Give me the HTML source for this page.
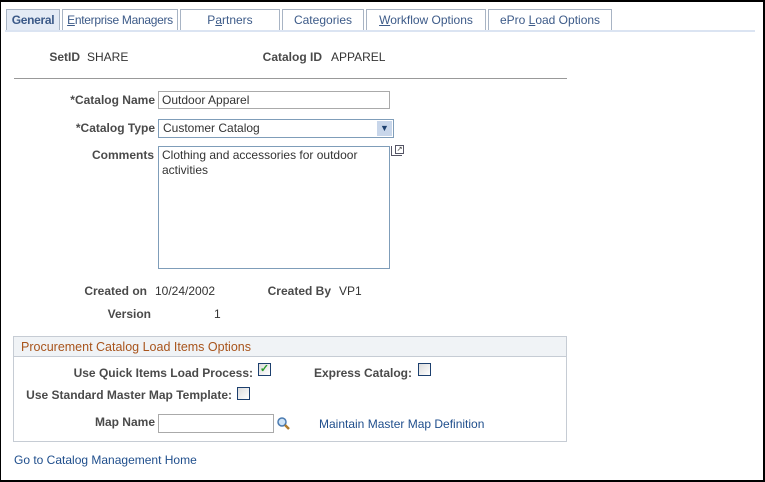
<!DOCTYPE html>
<html><head><style>
*{margin:0;padding:0;box-sizing:border-box}
body{width:765px;height:482px;position:relative;background:#fff;font-family:"Liberation Sans",Arial,sans-serif;font-size:12px;color:#333;overflow:hidden}
.frame{position:absolute;left:0;top:0;width:765px;height:482px;border:2px solid #000;border-left-width:1px}
.a{position:absolute;white-space:nowrap}
.b{position:absolute;white-space:nowrap;font-weight:bold;color:#4a4a4a;letter-spacing:0px;text-align:right;width:300px}
.tab{position:absolute;top:9px;height:22px;border:1px solid #a8b4c4;border-bottom:none;background:#fff;color:#3c5a88;text-align:center;line-height:20px;font-size:12px}
.tab.act{background:#e4ebf5;font-weight:bold;color:#3c5a88;letter-spacing:-0.3px}
.inp{position:absolute;border:1px solid #7f9db9;background:#fff;font-size:12px;padding-left:3px;line-height:16px}
.cb{position:absolute;width:13px;height:13px;border:1px solid #1c3f6e;background:linear-gradient(135deg,#dcdcdc,#fff)}
.lk{color:#1f4e8c}
</style></head><body>
<div class="frame"></div>
<div class="tab act" style="left:6px;width:54px">General</div>
<div class="tab" style="left:62px;width:116px;letter-spacing:-0.3px"><u>E</u>nterprise Managers</div>
<div class="tab" style="left:180px;width:100px">P<u>a</u>rtners</div>
<div class="tab" style="left:282px;width:82px">Cate<u>g</u>ories</div>
<div class="tab" style="left:366px;width:120px"><u>W</u>orkflow Options</div>
<div class="tab" style="left:488px;width:124px">ePro <u>L</u>oad Options</div>
<div style="position:absolute;left:5px;top:30px;width:750px;height:2px;background:#dbe4f2"></div>

<div class="b" style="left:-220px;top:50px">SetID</div><div class="a" style="left:87px;top:50px">SHARE</div>
<div class="b" style="left:22px;top:50px">Catalog ID</div><div class="a" style="left:331px;top:50px">APPAREL</div>
<div style="position:absolute;left:14px;top:78px;width:553px;height:1px;background:#999"></div>

<div class="b" style="left:-145px;top:93px">*Catalog Name</div>
<div class="inp" style="left:158px;top:91px;width:232px;height:18px;border-color:#aaa">Outdoor Apparel</div>
<div class="b" style="left:-145px;top:121px">*Catalog Type</div>
<div class="inp" style="left:158px;top:119px;width:236px;height:19px;padding-left:4px">Customer Catalog
<div style="position:absolute;right:1px;top:1px;width:15px;height:15px;background:#c8d6ea;color:#1c3f6e;font-size:9px;text-align:center;line-height:15px">&#9660;</div></div>
<div class="b" style="left:-146px;top:148px">Comments</div>
<div class="inp" style="left:158px;top:146px;width:232px;height:123px;padding:1px 3px;white-space:normal;line-height:15px">Clothing and accessories for outdoor activities</div>
<div class="a" style="left:391px;top:146px;width:11px;height:10px;border:1px solid #556;border-top:none;border-right:none"></div>
<div class="a" style="left:395px;top:145px;width:9px;height:9px;border:1px solid #556;font-size:7px;line-height:7px;text-align:center">&#8599;</div>

<div class="b" style="left:-153px;top:284px">Created on</div><div class="a" style="left:155px;top:284px">10/24/2002</div>
<div class="b" style="left:31px;top:284px">Created By</div><div class="a" style="left:339px;top:284px">VP1</div>
<div class="b" style="left:-149px;top:307px">Version</div><div class="a" style="left:214px;top:307px">1</div>

<div style="position:absolute;left:13px;top:336px;width:554px;height:106px;border:1px solid #c6ccd4"></div>
<div style="position:absolute;left:14px;top:337px;width:552px;height:20px;background:#f0f3f6;border-bottom:1px solid #c6ccd4"></div>
<div class="a" style="left:21px;top:340px;color:#a8541c;font-size:12.5px">Procurement Catalog Load Items Options</div>
<div class="b" style="left:-47px;top:366px">Use Quick Items Load Process:</div>
<div class="cb" style="left:258px;top:363px;color:#2a9a2a;font-size:11px;line-height:11px;text-align:center;font-weight:bold">&#10003;</div>
<div class="b" style="left:112px;top:366px">Express Catalog:</div>
<div class="cb" style="left:418px;top:363px"></div>
<div class="b" style="left:-68px;top:388px">Use Standard Master Map Template:</div>
<div class="cb" style="left:237px;top:387px"></div>
<div class="b" style="left:-145px;top:415px">Map Name</div>
<div class="inp" style="left:158px;top:414px;width:116px;height:19px;border-color:#aaa"></div>
<svg class="a" style="left:276px;top:416px" width="14" height="14"><circle cx="6" cy="6" r="4" fill="#cfe4f7" stroke="#4a7ab0" stroke-width="1.5"/><line x1="9" y1="9" x2="13" y2="13" stroke="#b07a2a" stroke-width="2.5"/></svg>
<div class="a lk" style="left:319px;top:417px">Maintain Master Map Definition</div>
<div class="a lk" style="left:14px;top:453px">Go to Catalog Management Home</div>
</body></html>
